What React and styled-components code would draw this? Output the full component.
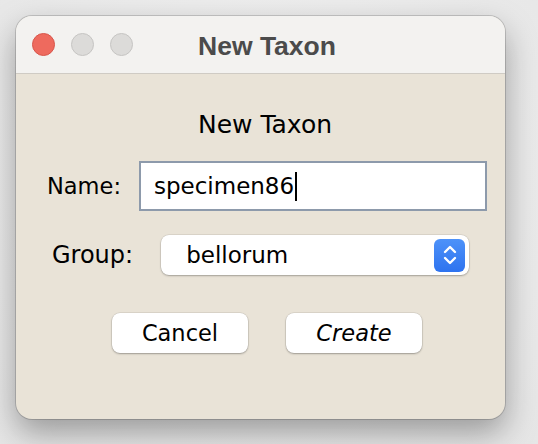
import React from "react";
import styled, { createGlobalStyle } from "styled-components";

const GlobalStyle = createGlobalStyle`
  html, body {
    margin: 0;
    padding: 0;
    background: #ececec;
  }
  body {
    width: 538px;
    height: 444px;
    overflow: hidden;
    font-family: "DejaVu Sans", "Liberation Sans", sans-serif;
  }
`;

const Desktop = styled.div`
  width: 538px;
  height: 444px;
  padding: 16px 0 0 16px;
  box-sizing: border-box;
  background: radial-gradient(ellipse at 50% 40%, #f2f2f2 0%, #e6e6e6 100%);
`;

const Window = styled.div`
  width: 489px;
  height: 403px;
  border-radius: 16px;
  overflow: hidden;
  display: flex;
  flex-direction: column;
  background: #e9e3d7;
  box-shadow: 0 0 0 1px rgba(0, 0, 0, 0.16), 0 14px 32px rgba(0, 0, 0, 0.34);
`;

const TitleBar = styled.div`
  height: 57px;
  flex-shrink: 0;
  position: relative;
  display: flex;
  align-items: center;
  justify-content: center;
  background: #f3f2f0;
  border-bottom: 1px solid #cfcbc4;
`;

const Lights = styled.div`
  position: absolute;
  left: 16px;
  top: 17px;
  display: flex;
  gap: 16px;
`;

const Light = styled.span`
  width: 23px;
  height: 23px;
  border-radius: 50%;
  box-sizing: border-box;
  background: ${(p) => (p.$red ? "#ee6a5e" : "#dcdbd9")};
  border: 1px solid ${(p) => (p.$red ? "#d8564b" : "#c6c5c3")};
`;

const Title = styled.div`
  font-family: "Liberation Sans", Arial, sans-serif;
  font-weight: 700;
  font-size: 26.5px;
  color: #4b4b4b;
  margin: 3px 0 0 13px;
`;

const Body = styled.div`
  display: flex;
  flex-direction: column;
  padding-top: 36px;
  color: #000;
`;

const Heading = styled.div`
  text-align: center;
  font-size: 25px;
  line-height: 30px;
  height: 30px;
  padding-left: 9px;
  margin-bottom: 21px;
`;

const Row = styled.div`
  display: flex;
  align-items: center;
  padding-left: ${(p) => p.$indent}px;
  gap: ${(p) => p.$gap}px;
  margin-bottom: ${(p) => p.$after}px;
`;

const Label = styled.span`
  font-size: ${(p) => p.$size}px;
`;

const TextField = styled.div`
  width: 348px;
  height: 50px;
  box-sizing: border-box;
  background: #fff;
  border: 2px solid #8d9aab;
  display: flex;
  align-items: center;
  padding-left: 13px;
  font-size: 23px;
`;

const Caret = styled.span`
  display: inline-block;
  width: 2px;
  height: 29px;
  background: #000;
  margin-left: 1px;
`;

const Select = styled.div`
  width: 308px;
  height: 40px;
  box-sizing: border-box;
  background: #fff;
  border-radius: 8px;
  box-shadow: 0 0 0 0.5px rgba(0, 0, 0, 0.12), 0 1px 2px rgba(0, 0, 0, 0.25);
  display: flex;
  align-items: center;
  justify-content: space-between;
  padding: 0 4px 0 25px;
  font-size: 23px;
`;

const Stepper = styled.span`
  width: 31px;
  height: 33px;
  border-radius: 6px;
  background: linear-gradient(#4d92f9, #2e73ef);
  display: flex;
  align-items: center;
  justify-content: center;
`;

const ButtonRow = styled.div`
  display: flex;
  justify-content: center;
  gap: 38px;
  padding-left: 13px;
`;

const Button = styled.button`
  width: 136px;
  height: 40px;
  border: none;
  border-radius: 8px;
  background: #fff;
  box-shadow: 0 0 0 0.5px rgba(0, 0, 0, 0.12), 0 1px 2px rgba(0, 0, 0, 0.28);
  font-family: "DejaVu Sans", sans-serif;
  font-size: 22.5px;
  font-style: ${(p) => (p.$default ? "italic" : "normal")};
  color: #000;
  padding: 0;
`;

export default function App() {
  return (
    <>
      <GlobalStyle />
      <Desktop>
        <Window>
          <TitleBar>
            <Lights>
              <Light $red />
              <Light />
              <Light />
            </Lights>
            <Title>New Taxon</Title>
          </TitleBar>
          <Body>
            <Heading>New Taxon</Heading>
            <Row $indent={31} $gap={18} $after={24}>
              <Label $size={22.5}>Name:</Label>
              <TextField>
                specimen86
                <Caret />
              </TextField>
            </Row>
            <Row $indent={36} $gap={28} $after={38}>
              <Label $size={24}>Group:</Label>
              <Select>
                bellorum
                <Stepper>
                  <svg width="16" height="24" viewBox="0 0 16 24" fill="none" stroke="#fff" strokeWidth="2.4" strokeLinecap="round" strokeLinejoin="round">
                    <path d="M3 9 L8 4 L13 9" />
                    <path d="M3 15 L8 20 L13 15" />
                  </svg>
                </Stepper>
              </Select>
            </Row>
            <ButtonRow>
              <Button>Cancel</Button>
              <Button $default>Create</Button>
            </ButtonRow>
          </Body>
        </Window>
      </Desktop>
    </>
  );
}
